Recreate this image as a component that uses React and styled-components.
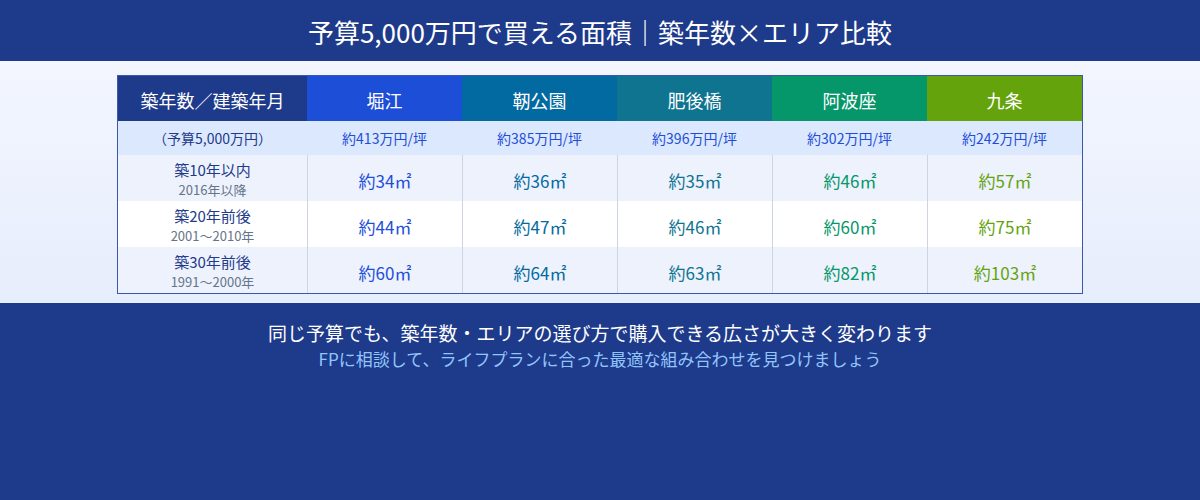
import React from "react";
import styled, { createGlobalStyle } from "styled-components";

const GlobalStyle = createGlobalStyle`
  html, body {
    margin: 0;
    padding: 0;
    background: #1e3a8a;
  }
  body {
    font-family: "Noto Sans CJK JP", "Noto Sans", sans-serif;
  }
`;

export const Page = styled.div`
  width: 1200px;
  height: 500px;
  display: flex;
  flex-direction: column;
  background: #1e3a8a;
`;

export const Header = styled.header`
  height: 61px;
  display: flex;
  align-items: center;
  justify-content: center;
  color: white;
  font-size: 26px;
  padding-top: 2px;
  box-sizing: border-box;
`;

export const Middle = styled.section`
  height: 242px;
  background: linear-gradient(180deg, #f3f6ff 0%, #e6edfc 100%);
  display: flex;
  justify-content: center;
  padding-top: 14px;
  box-sizing: border-box;
`;

export const Table = styled.div`
  width: 966px;
  height: 219px;
  box-sizing: border-box;
  border: 1px solid #3a58a6;
  display: grid;
  grid-template-columns: 189px repeat(5, 155px);
  grid-template-rows: 45px 34px 46px 46px 46px;
`;

export const HeadCell = styled.div`
  background: ${(p) => p.bg};
  color: white;
  font-size: 18px;
  display: flex;
  align-items: center;
  justify-content: center;
  padding-top: 2px;
`;

export const PriceCell = styled.div`
  background: #dbe8fd;
  color: ${(p) => (p.label ? "#1e3a8a" : "#1d4ed8")};
  font-size: 14px;
  display: flex;
  align-items: center;
  justify-content: center;
`;

export const LabelCell = styled.div`
  background: ${(p) => (p.alt ? "#edf2fd" : "#ffffff")};
  display: flex;
  flex-direction: column;
  align-items: center;
  justify-content: center;
  padding-top: 3px;
  box-sizing: border-box;
  p {
    margin: 0;
    color: #1e3a8a;
    font-size: 15px;
    line-height: 20px;
  }
  span {
    color: #64748b;
    font-size: 13px;
    line-height: 20px;
  }
`;

export const DataCell = styled.div`
  background: ${(p) => (p.alt ? "#edf2fd" : "#ffffff")};
  border-left: 1px solid #cdd5e2;
  color: ${(p) => p.color};
  font-size: 17px;
  display: flex;
  align-items: center;
  justify-content: center;
  padding-top: 5px;
  box-sizing: border-box;
`;

export const Footer = styled.footer`
  flex: 1;
  display: flex;
  flex-direction: column;
  align-items: center;
  padding-top: 16px;
  p {
    margin: 0;
  }
`;

export const Lead = styled.p`
  color: white;
  font-size: 19px;
  line-height: 27px;
`;

export const Sub = styled.p`
  color: #93c5fd;
  font-size: 17px;
  line-height: 26px;
`;

const areas = [
  { name: "堀江", bg: "#1d4ed8", color: "#1d4ed8", price: "約413万円/坪", sizes: [34, 44, 60] },
  { name: "靭公園", bg: "#0369a1", color: "#0369a1", price: "約385万円/坪", sizes: [36, 47, 64] },
  { name: "肥後橋", bg: "#0e7490", color: "#0e7490", price: "約396万円/坪", sizes: [35, 46, 63] },
  { name: "阿波座", bg: "#059669", color: "#059669", price: "約302万円/坪", sizes: [46, 60, 82] },
  { name: "九条", bg: "#65a30d", color: "#65a30d", price: "約242万円/坪", sizes: [57, 75, 103] },
];

const ages = [
  { label: "築10年以内", years: "2016年以降" },
  { label: "築20年前後", years: "2001〜2010年" },
  { label: "築30年前後", years: "1991〜2000年" },
];

export default function App() {
  return (
    <Page>
      <GlobalStyle />
      <Header>予算5,000万円で買える面積｜築年数×エリア比較</Header>
      <Middle>
        <Table>
          <HeadCell bg="#1e3a8a">築年数／建築年月</HeadCell>
          {areas.map((a) => (
            <HeadCell key={a.name} bg={a.bg}>{a.name}</HeadCell>
          ))}
          <PriceCell label>（予算5,000万円）</PriceCell>
          {areas.map((a) => (
            <PriceCell key={a.name}>{a.price}</PriceCell>
          ))}
          {ages.map((row, i) => (
            <React.Fragment key={row.label}>
              <LabelCell alt={i !== 1}>
                <p>{row.label}</p>
                <span>{row.years}</span>
              </LabelCell>
              {areas.map((a) => (
                <DataCell key={a.name} alt={i !== 1} color={a.color}>
                  約{a.sizes[i]}㎡
                </DataCell>
              ))}
            </React.Fragment>
          ))}
        </Table>
      </Middle>
      <Footer>
        <Lead>同じ予算でも、築年数・エリアの選び方で購入できる広さが大きく変わります</Lead>
        <Sub>FPに相談して、ライフプランに合った最適な組み合わせを見つけましょう</Sub>
      </Footer>
    </Page>
  );
}
